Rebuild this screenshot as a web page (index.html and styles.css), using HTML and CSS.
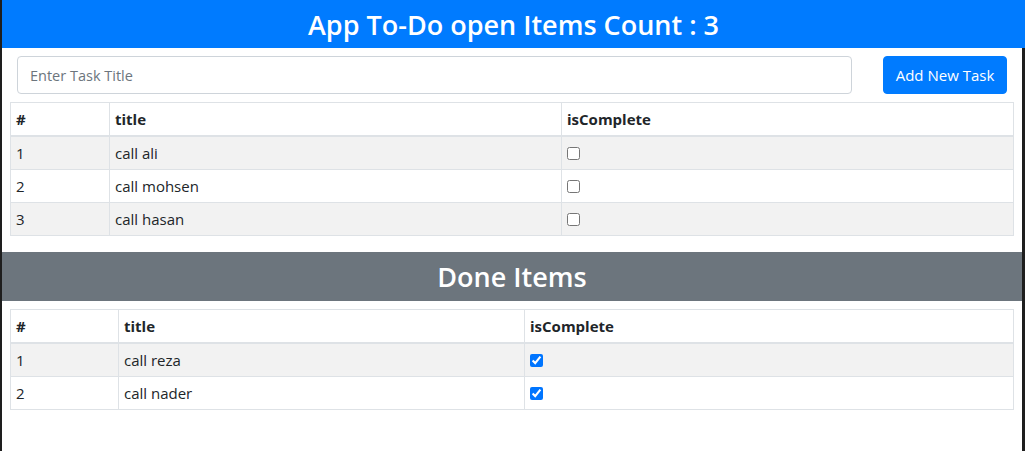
FILE: index.html
```html
<!DOCTYPE html>
<html lang="en">
<head>
<meta charset="utf-8">
<title>App To-Do</title>
<link rel="stylesheet" href="styles.css">
</head>
<body>
<div class="page">
  <h3 class="banner banner-primary">App To-Do open Items Count : 3</h3>
  <div class="add-row">
    <input class="task-input" type="text" placeholder="Enter Task Title">
    <button class="add-btn" type="button">Add New Task</button>
  </div>
  <table class="grid grid-open">
    <colgroup><col class="c-num"><col class="c-title"><col class="c-done"></colgroup>
    <thead>
      <tr><th>#</th><th>title</th><th>isComplete</th></tr>
    </thead>
    <tbody>
      <tr><td>1</td><td>call ali</td><td><input class="chk" type="checkbox"></td></tr>
      <tr><td>2</td><td>call mohsen</td><td><input class="chk" type="checkbox"></td></tr>
      <tr><td>3</td><td>call hasan</td><td><input class="chk" type="checkbox"></td></tr>
    </tbody>
  </table>
  <h3 class="banner banner-secondary">Done Items</h3>
  <table class="grid grid-done">
    <colgroup><col class="c-num"><col class="c-title"><col class="c-done"></colgroup>
    <thead>
      <tr><th>#</th><th>title</th><th>isComplete</th></tr>
    </thead>
    <tbody>
      <tr><td>1</td><td>call reza</td><td><input class="chk" type="checkbox" checked></td></tr>
      <tr><td>2</td><td>call nader</td><td><input class="chk" type="checkbox" checked></td></tr>
    </tbody>
  </table>
</div>
</body>
</html>
```
FILE: styles.css
```css
html, body {
  margin: 0;
  height: 100%;
}
body {
  background: #1e1e1e;
  padding: 0 3px 0 2px;
  box-sizing: border-box;
  font-family: "Open Sans", "Noto Sans", sans-serif;
  font-size: 15px;
  line-height: 24px;
  color: #212529;
}
.page {
  background: #fff;
  min-height: 100%;
}
.banner {
  margin: 0;
  height: 48px;
  padding-top: 2px;
  box-sizing: border-box;
  display: flex;
  align-items: center;
  justify-content: center;
  color: #fff;
  font-size: 27px;
  font-weight: 600;
  line-height: 1.2;
}
.banner-primary {
  background: #007bff;
  margin-right: -3px;
}
.banner-secondary {
  background: #6c757d;
  margin-top: 16px;
  height: 49px;
}
.add-row {
  display: flex;
  gap: 31px;
  padding: 8px 15px;
}
.task-input {
  flex: 1;
  height: 38px;
  box-sizing: border-box;
  border: 1px solid #ced4da;
  border-radius: 4px;
  padding: 6px 12px;
  font: inherit;
  font-size: 14.5px;
  color: #495057;
  outline: none;
}
.task-input::placeholder {
  color: #6c757d;
  opacity: 1;
}
.add-btn {
  width: 124px;
  height: 38px;
  border: 1px solid #007bff;
  border-radius: 4px;
  background: #007bff;
  color: #fff;
  font: inherit;
  padding: 0;
}
.grid {
  border-collapse: collapse;
  margin: 0 8px;
  width: calc(100% - 16px);
  table-layout: fixed;
}
.grid-done {
  margin-top: 8px;
}
.grid th, .grid td {
  border: 1px solid #dee2e6;
  padding: 4px 5px;
  text-align: left;
  vertical-align: top;
  height: 24px;
}
.grid th {
  font-weight: 700;
}
.grid thead th {
  border-bottom: 2px solid #dee2e6;
}
.grid tbody tr:nth-child(odd) {
  background: #f2f2f2;
}
.grid-open .c-num { width: 99px; }
.grid-open .c-title { width: 452px; }
.grid-done .c-num { width: 108px; }
.grid-done .c-title { width: 406px; }
.chk {
  margin: 0;
  width: 13px;
  height: 13px;
  vertical-align: -1px;
}
```
